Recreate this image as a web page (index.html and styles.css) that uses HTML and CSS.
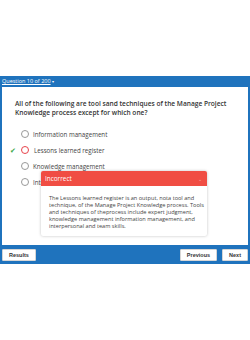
FILE: index.html
```html
<!DOCTYPE html>
<html>
<head>
  <title>Quiz</title>
  <link rel="stylesheet" href="styles.css">
</head>
<body>
  <div class="quiz">
    <div class="topbar">
      <a href="#" class="counter">Question 10 of 200</a> <span class="caret">&#9662;</span>
    </div>

    <div class="content">
      <p class="question">All of the following are tool sand techniques of the Manage Project Knowledge process except for which one?</p>

      <ul class="options">
        <li><span class="mark"></span><span class="radio"></span>Information management</li>
        <li class="wrong"><span class="mark">&#10004;</span><span class="radio"></span>Lessons learned register</li>
        <li><span class="mark"></span><span class="radio"></span>Knowledge management</li>
        <li><span class="mark"></span><span class="radio"></span>Interpersonal and team skills</li>
      </ul>

      <div class="feedback">
        <div class="feedback-head">
          <span>Incorrect</span>
          <span class="chevron">&#8964;</span>
        </div>
        <div class="feedback-body">
          The Lessons learned register is an output, nota tool and technique, of the Manage Project Knowledge process. Tools and techniques of theprocess include expert judgment, knowledge management information management, and interpersonal and team skills.
        </div>
      </div>
    </div>

    <div class="footer">
      <button class="btn">Results</button>
      <div class="nav">
        <button class="btn">Previous</button>
        <button class="btn">Next</button>
      </div>
    </div>
  </div>
</body>
</html>
```

FILE: styles.css
```css
body {
  margin: 0;
  background-color: white;
  font-family: "Open Sans", sans-serif;
}

.quiz {
  margin-top: 76px;
  background-color: #1f73bd;
}

.topbar {
  height: 11px;
  line-height: 11px;
  padding-left: 2px;
  font-size: 5.5px;
  color: white;
}

.topbar .counter {
  color: white;
}

.topbar .caret {
  font-size: 4px;
}

.content {
  position: relative;
  margin: 0 2px;
  height: 158px;
  background-color: white;
  padding: 12px 13px 0;
  box-sizing: border-box;
}

.question {
  margin: 0;
  font-size: 6.6px;
  line-height: 9px;
  font-weight: 600;
  color: #333;
}

.options {
  list-style: none;
  margin: 9px 0 0;
  padding: 0;
}

.options li {
  display: flex;
  align-items: center;
  height: 16px;
  font-size: 6.2px;
  color: #444;
}

.mark {
  width: 7px;
  margin-left: -5px;
  color: #3aa845;
  font-size: 7px;
}

.radio {
  width: 6px;
  height: 6px;
  border: 1px solid #999;
  border-radius: 50%;
  margin: 0 4px;
}

.wrong .radio {
  border-color: #e8434b;
  margin-right: 5px;
}

.feedback {
  position: absolute;
  left: 39px;
  top: 84px;
  width: 166px;
  background-color: white;
  border-radius: 2px;
  box-shadow: 0 0 3px rgba(0, 0, 0, 0.25);
}

.feedback-head {
  display: flex;
  justify-content: space-between;
  align-items: center;
  height: 15px;
  padding: 0 5px 0 4px;
  background-color: #f04d43;
  color: white;
  font-size: 6.4px;
  border-radius: 2px 2px 0 0;
}

.feedback-head .chevron {
  font-size: 5px;
  color: #f7b0aa;
}

.feedback-body {
  padding: 9px 2px 0 8px;
  height: 50px;
  box-sizing: border-box;
  font-size: 5.6px;
  line-height: 7px;
  color: #444;
}

.footer {
  display: flex;
  justify-content: space-between;
  align-items: center;
  height: 19px;
  padding: 0 2px;
}

.nav {
  display: flex;
  gap: 5px;
}

.btn {
  height: 12px;
  padding: 0 6px;
  background-color: white;
  border: 1px solid #d6d6d6;
  border-radius: 1px;
  font-family: "Liberation Sans", Arial, sans-serif;
  font-weight: bold;
  font-size: 5.5px;
  color: #333;
}
```
